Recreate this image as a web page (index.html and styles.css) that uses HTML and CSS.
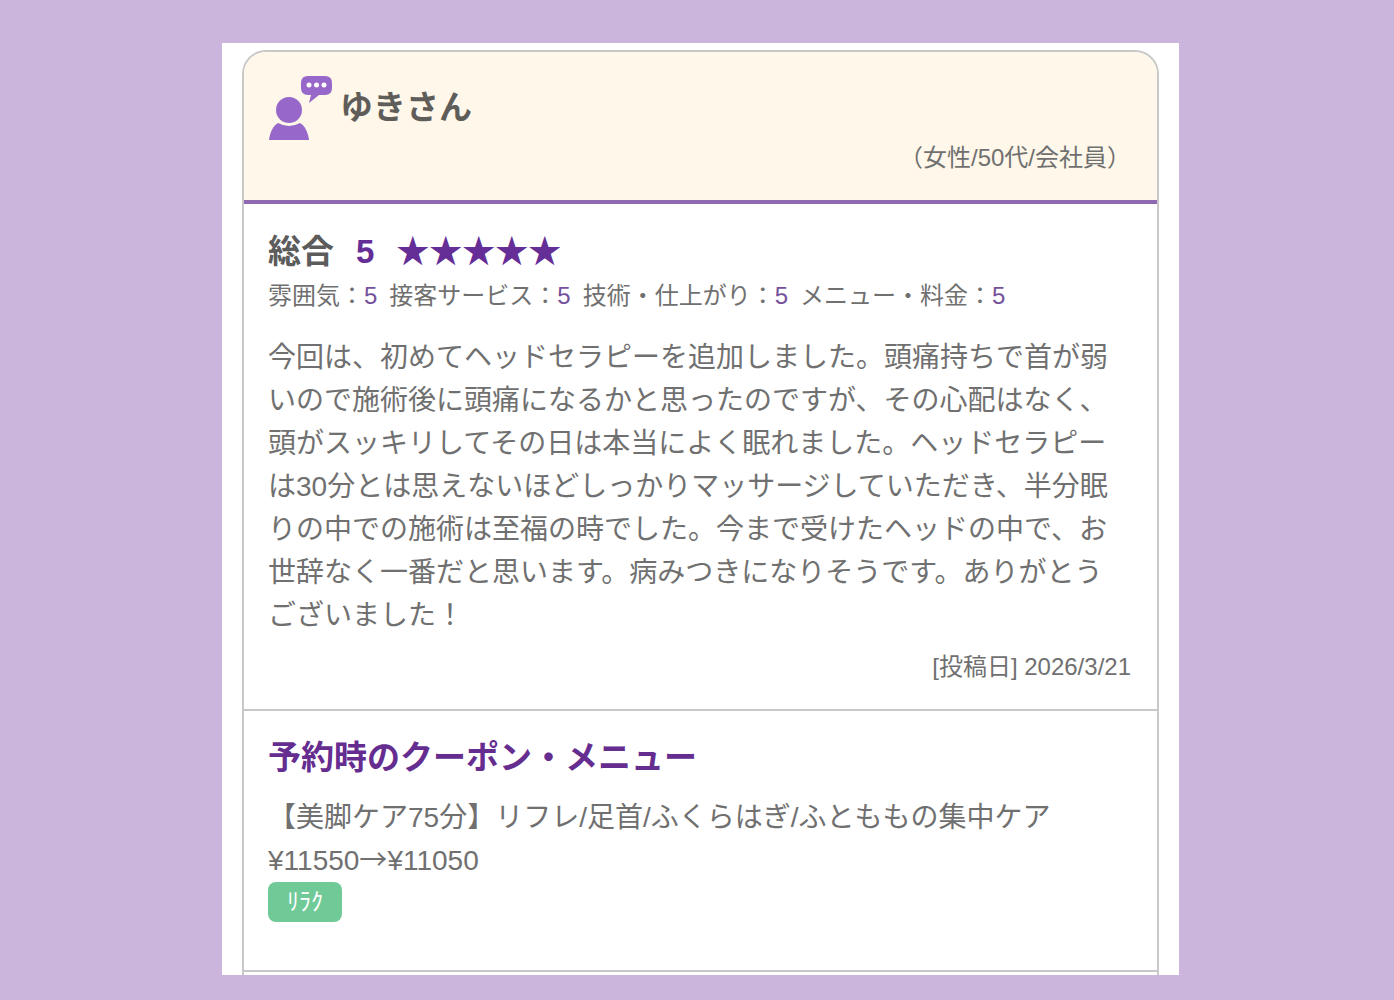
FILE: index.html
```html
<!DOCTYPE html>
<html lang="ja">
<head>
    <meta charset="UTF-8">
    <meta name="viewport" content="width=device-width, initial-scale=1.0">
    <title>口コミ</title>
    <link rel="stylesheet" href="styles.css">
</head>
<body>

<main class="sheet">
    <article class="review">
        <header class="review-header">
            <div class="user">
                <svg class="user-icon" viewBox="0 0 65 66" aria-hidden="true">
                    <circle cx="21" cy="35" r="13"/>
                    <path d="M1 65C2 57 5 51 10 48Q21 54 32 48C37 51 40 57 41 65Z"/>
                    <path d="M40 1H57Q64 1 64 8V13Q64 20 57 20H51L41 28L43 20H40Q33 20 33 13V8Q33 1 40 1Z"/>
                    <g class="dots">
                        <circle cx="41" cy="10" r="2.5"/>
                        <circle cx="48.5" cy="10" r="2.5"/>
                        <circle cx="56" cy="10" r="2.5"/>
                    </g>
                </svg>
                <h1 class="user-name">ゆきさん</h1>
            </div>
            <p class="profile">（女性/50代/会社員）</p>
        </header>

        <section class="review-body">
            <div class="total">
                <span>総合</span>
                <span class="score">5</span>
                <span class="stars">★★★★★</span>
            </div>
            <ul class="ratings">
                <li>雰囲気：<b>5</b></li>
                <li>接客サービス：<b>5</b></li>
                <li>技術・仕上がり：<b>5</b></li>
                <li>メニュー・料金：<b>5</b></li>
            </ul>
            <p class="comment">今回は、初めてヘッドセラピーを追加しました。頭痛持ちで首が弱いので施術後に頭痛になるかと思ったのですが、その心配はなく、頭がスッキリしてその日は本当によく眠れました。ヘッドセラピーは30分とは思えないほどしっかりマッサージしていただき、半分眠りの中での施術は至福の時でした。今まで受けたヘッドの中で、お世辞なく一番だと思います。病みつきになりそうです。ありがとうございました！</p>
            <p class="date">[投稿日] 2026/3/21</p>
        </section>

        <section class="coupon">
            <h2 class="coupon-title">予約時のクーポン・メニュー</h2>
            <p class="coupon-text">【美脚ケア75分】リフレ/足首/ふくらはぎ/ふとももの集中ケア<br>¥11550<span class="arrow">→</span>¥11050</p>
            <span class="tag">ﾘﾗｸ</span>
        </section>
    </article>
</main>

</body>
</html>
```

FILE: styles.css
```css
* {
    box-sizing: border-box;
}
body {
    margin: 0;
    padding: 43px 215px 25px 222px;
    background-color: #cbb5dc;
    color: #707070;
    font-family: "Liberation Sans", "Noto Sans CJK JP", sans-serif;
    font-size: 28px;
    line-height: 43px;
}
h1, h2, p, ul {
    margin: 0;
    padding: 0;
}
.sheet {
    padding: 7px 20px 0;
    background-color: #fff;
}
.review {
    padding-bottom: 3px;
    border: 2px solid #c8c8c8;
    border-bottom: 0;
    border-radius: 24px 24px 0 0;
}

/* Cabecera */
.review-header {
    padding: 23px 26px 25px 24px;
    background-color: #fff7e9;
    border-bottom: 4px solid #8e68b0;
    border-radius: 22px 22px 0 0;
}
.user {
    display: flex;
    align-items: center;
    gap: 7px;
}
.user-icon {
    width: 65px;
    height: 66px;
    fill: #9768c9;
}
.user-icon .dots {
    fill: #fff;
}
.user-name {
    color: #5f5d5a;
    font-size: 33px;
    line-height: 44px;
}
.profile {
    font-size: 24px;
    line-height: 34px;
    text-align: right;
}

.review-body {
    padding: 26px 26px 20px 24px;
    border-bottom: 2px solid #c8c8c8;
}
.total {
    display: flex;
    gap: 22px;
    color: #5c5c5c;
    font-size: 33px;
    font-weight: bold;
    line-height: 44px;
}
.score, .stars {
    color: #652d96;
}
.stars {
    font-weight: normal;
}
.ratings {
    display: flex;
    flex-wrap: wrap;
    gap: 0 12px;
    list-style: none;
    font-size: 24px;
    line-height: 44px;
}
.ratings b {
    color: #74519a;
    font-weight: normal;
}
.comment {
    margin-top: 18px;
    padding-right: 10px;
}
.date {
    margin-top: 8px;
    font-size: 24px;
    line-height: 44px;
    text-align: right;
}

.coupon {
    padding: 25px 26px 48px 24px;
    border-bottom: 2px solid #c8c8c8;
}
.coupon-title {
    color: #652d90;
    font-size: 33px;
    line-height: 44px;
}
.coupon-text {
    margin-top: 16px;
}
.arrow {
    font-family: "Noto Sans CJK JP", sans-serif;
    line-height: 1;
}
.tag {
    display: block;
    width: fit-content;
    padding: 0 19px;
    background-color: #70ca98;
    border-radius: 8px;
    color: #fff;
    font-size: 24px;
    line-height: 40px;
}

@media (max-width: 1000px) {
    body {
        padding: 20px;
    }
}
```
